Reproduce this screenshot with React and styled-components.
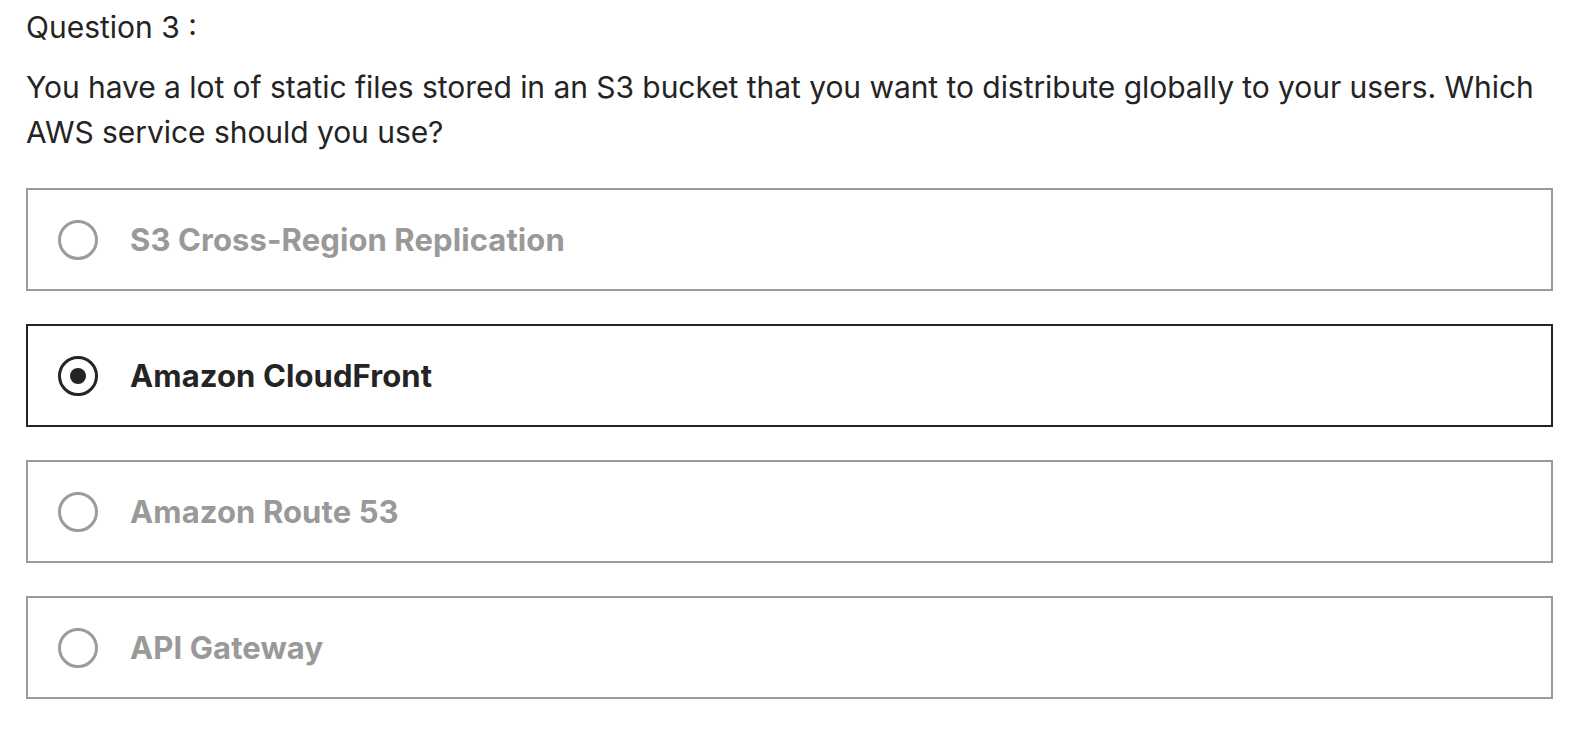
import React from "react";
import styled, { createGlobalStyle } from "styled-components";

const Global = createGlobalStyle`
  html, body { margin: 0; padding: 0; background: #ffffff; }
  body { font-family: Inter, "Noto Sans", sans-serif; color: #242424; }
`;

const Page = styled.main`
  padding: 5px 41px 40px 26px;
`;

const Title = styled.h2`
  margin: 0;
  font-size: 30px;
  line-height: 45px;
  font-weight: 400;
  color: #242424;
`;

const Prompt = styled.p`
  margin: 15px 0 0;
  font-size: 30px;
  line-height: 45px;
  font-weight: 400;
  letter-spacing: -0.05px;
  color: #242424;
`;

const Options = styled.div`
  margin-top: 33px;
  display: flex;
  flex-direction: column;
  gap: 33px;
`;

const Option = styled.label`
  box-sizing: border-box;
  height: 103px;
  display: flex;
  align-items: center;
  gap: 32px;
  padding-left: 30px;
  border: 2px solid ${(p) => (p.$selected ? "#242424" : "#9b9b9b")};
  cursor: pointer;
`;

const Radio = styled.span`
  box-sizing: border-box;
  width: 40px;
  height: 40px;
  border-radius: 50%;
  border: 3px solid ${(p) => (p.$selected ? "#242424" : "#9b9b9b")};
  display: flex;
  align-items: center;
  justify-content: center;
  flex-shrink: 0;
  &::after {
    content: "";
    width: 16px;
    height: 16px;
    border-radius: 50%;
    background: #242424;
    display: ${(p) => (p.$selected ? "block" : "none")};
  }
`;

const OptionText = styled.span`
  font-size: 31px;
  font-weight: 700;
  letter-spacing: 0.1px;
  color: ${(p) => (p.$selected ? "#242424" : "#999999")};
`;

const options = [
  "S3 Cross-Region Replication",
  "Amazon CloudFront",
  "Amazon Route 53",
  "API Gateway",
];

export default function App() {
  const selected = 1;
  return (
    <>
      <Global />
      <Page>
        <Title>Question 3 :</Title>
        <Prompt>
          You have a lot of static files stored in an S3 bucket that you want to
          distribute globally to your users. Which AWS service should you use?
        </Prompt>
        <Options>
          {options.map((o, i) => (
            <Option key={o} $selected={i === selected}>
              <Radio $selected={i === selected} />
              <OptionText $selected={i === selected}>{o}</OptionText>
            </Option>
          ))}
        </Options>
      </Page>
    </>
  );
}
